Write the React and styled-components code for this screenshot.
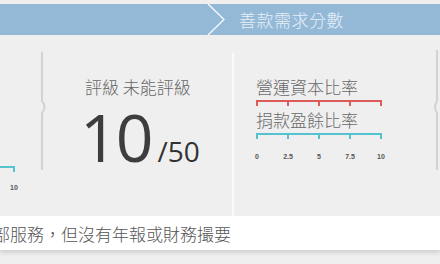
import React from 'react';
import styled, { createGlobalStyle } from 'styled-components';

const GlobalStyle = createGlobalStyle`
  html, body {
    margin: 0;
    padding: 0;
    background: #efefef;
  }
  body {
    font-family: "Noto Sans CJK TC", "Noto Sans", sans-serif;
  }
`;

const Page = styled.div`
  width: 440px;
  height: 264px;
  overflow: hidden;
  background: #efefef;
  display: flex;
  flex-direction: column;
`;

const HeaderBar = styled.div`
  margin-top: 4px;
  height: 31px;
  background: #94b9d7;
  display: flex;
  align-items: center;
  padding-left: 207px;
`;

const HeaderTitle = styled.span`
  margin-left: 14px;
  color: #e6eff7;
  font-size: 17px;
  font-weight: 300;
  letter-spacing: 0.5px;
  line-height: 1;
`;

const StatsRow = styled.div`
  height: 181px;
  display: flex;
`;

const ChartStub = styled.div`
  width: 40px;
  padding-top: 131px;
  box-sizing: border-box;
`;

const StubLine = styled.div`
  width: 13px;
  height: 4px;
  border-top: 2px solid #55c2cf;
  border-right: 2px solid #55c2cf;
`;

const StubLabel = styled.div`
  margin-top: 12px;
  padding-left: 10px;
  font-family: "Liberation Sans", Arial, sans-serif;
  font-size: 7px;
  font-weight: bold;
  color: #555;
`;

const ScoreCol = styled.div`
  width: 184px;
  padding: 42px 0 0 37px;
  box-sizing: border-box;
`;

const Label = styled.div`
  font-size: 17px;
  font-weight: 300;
  line-height: 20px;
  color: ${(p) => p.$color || '#666'};
  white-space: nowrap;
`;

const ScoreLine = styled.div`
  margin: 6px 0 0 -5px;
  display: flex;
  align-items: baseline;
  font-family: "Open Sans", "Liberation Sans", sans-serif;
  color: #3d3d3d;
  line-height: 1;
`;

const ScoreBig = styled.span`
  font-size: 66px;
  letter-spacing: -2px;
`;

const ScoreMax = styled.span`
  margin-left: 6px;
  font-size: 28px;
  color: #333;
`;

const Separator = styled.div`
  width: 2px;
  margin: 18px 0 -10px;
  background: #fafafa;
`;

const RatioCol = styled.div`
  width: 197px;
  padding: 42px 0 0 22px;
  box-sizing: border-box;
`;

const Bar = styled.div`
  width: 126px;
  height: 6px;
  margin: 3px 0 4px;
  box-sizing: border-box;
  display: flex;
  justify-content: space-between;
  border-top: 2px solid ${(p) => p.$color};
`;

const Tick = styled.div`
  width: 2px;
  height: 4px;
  background: ${(p) => p.$color};
`;

const Axis = styled.div`
  width: 126px;
  margin-top: 14px;
  display: flex;
  justify-content: space-between;
`;

const AxisLabel = styled.div`
  width: 2px;
  display: flex;
  justify-content: center;
  white-space: nowrap;
  font-family: "Liberation Sans", Arial, sans-serif;
  font-size: 7px;
  font-weight: bold;
  color: #555;
`;

const Footer = styled.div`
  height: 34px;
  background: #fff;
  box-shadow: 0 3px 4px rgba(0, 0, 0, 0.12);
  display: flex;
  align-items: center;
  overflow: hidden;
`;

const FooterText = styled.span`
  margin-left: -7px;
  font-size: 17px;
  font-weight: 300;
  color: #555;
  white-space: nowrap;
`;

const Chevron = () => (
  <svg width="18" height="31" viewBox="0 0 18 31">
    <path d="M1 0 L17 15.5 L1 31" fill="none" stroke="#f4f8fb" strokeWidth="1.4" />
  </svg>
);

const NotchDivider = ({ flip }) => (
  <svg width="8" height="181" viewBox="0 0 8 181" style={{ flex: 'none' }}>
    <path
      d={
        flip
          ? 'M6 15 L6 66 Q2 72 6 78 L6 135'
          : 'M2 17 L2 66 Q7 72 2 78 L2 135'
      }
      fill="none"
      stroke="#cfd2d6"
      strokeWidth="2"
    />
  </svg>
);

const ticks = [0, 1, 2, 3, 4];

const RatioBar = ({ color }) => (
  <Bar $color={color}>
    {ticks.map((t) => (
      <Tick key={t} $color={color} />
    ))}
  </Bar>
);

export default function App() {
  return (
    <Page>
      <GlobalStyle />
      <HeaderBar>
        <Chevron />
        <HeaderTitle>善款需求分數</HeaderTitle>
      </HeaderBar>

      <StatsRow>
        <ChartStub>
          <StubLine />
          <StubLabel>10</StubLabel>
        </ChartStub>
        <NotchDivider />

        <ScoreCol>
          <Label>評級 未能評級</Label>
          <ScoreLine>
            <ScoreBig>10</ScoreBig>
            <ScoreMax>/50</ScoreMax>
          </ScoreLine>
        </ScoreCol>

        <Separator />

        <RatioCol>
          <Label $color="#6a6a6a">營運資本比率</Label>
          <RatioBar color="#dd5b5b" />
          <Label $color="#6a6a6a">捐款盈餘比率</Label>
          <RatioBar color="#55c2cf" />
          <Axis>
            {['0', '2.5', '5', '7.5', '10'].map((v) => (
              <AxisLabel key={v}>{v}</AxisLabel>
            ))}
          </Axis>
        </RatioCol>

        <NotchDivider flip />
      </StatsRow>

      <Footer>
        <FooterText>部服務，但沒有年報或財務撮要</FooterText>
      </Footer>
    </Page>
  );
}
